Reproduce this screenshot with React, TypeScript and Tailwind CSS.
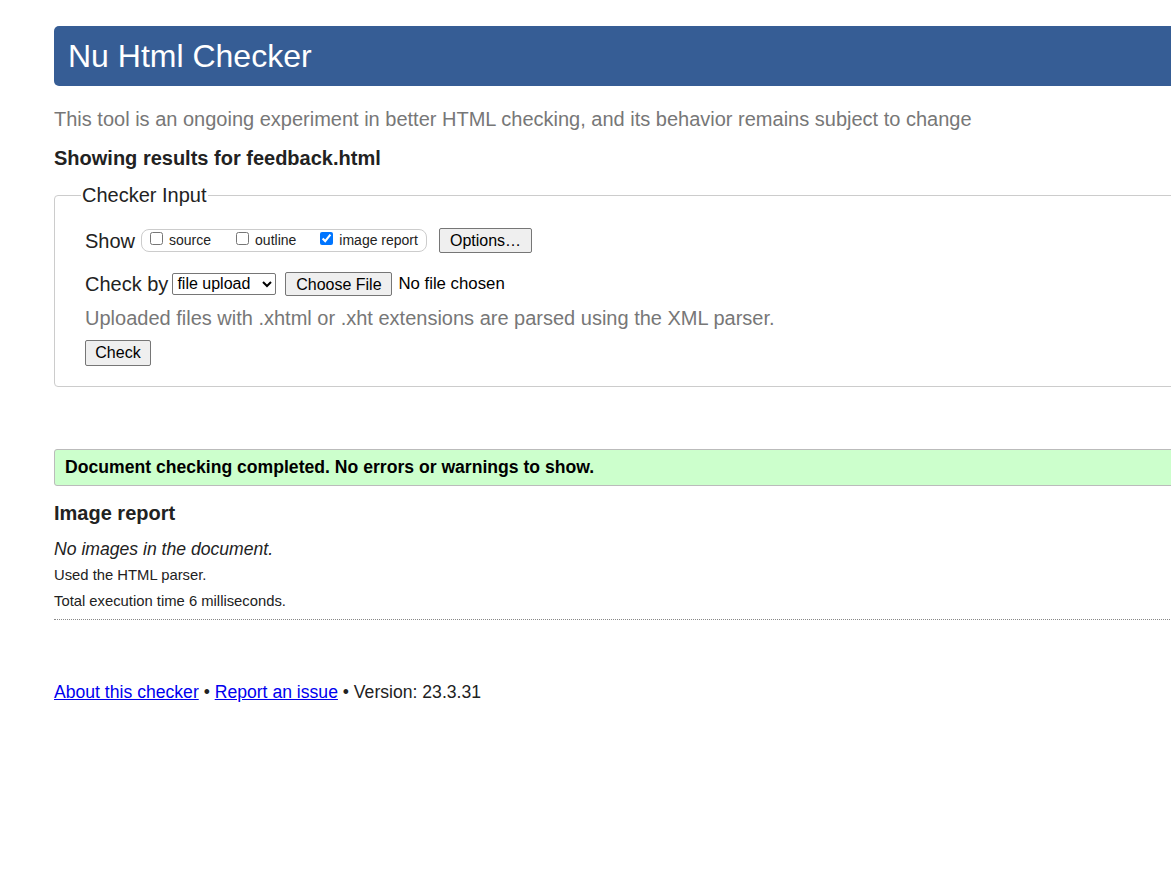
import React from 'react';

function App() {
    return (
        <div className="w-full min-h-[886px] overflow-hidden bg-white text-[#222] font-['Liberation_Sans',Arial,sans-serif]">
            <div className="ml-[54px] w-[1300px] pt-[26px]">
                <h1 className="h-[60px] flex items-center pl-[14px] bg-[#365d95] text-white text-[32px] leading-none rounded-l-[5px]">
                    Nu Html Checker
                </h1>

                <p className="mt-[21px] text-[20px] leading-6 text-[#777]">
                    This tool is an ongoing experiment in better HTML checking, and its behavior remains subject to change
                </p>

                <p className="mt-[15px] text-[20px] leading-6 font-bold">Showing results for feedback.html</p>

                <fieldset className="mt-[13px] border border-[#ccc] rounded-[4px] pl-[30px] pb-[20px]">
                    <legend className="-ml-[4px] px-[1px] text-[20px] leading-6">Checker Input</legend>

                    <div className="mt-[21px] flex items-center">
                        <span className="text-[20px] leading-6">Show</span>
                        <div className="ml-[6px] h-[23px] w-[286px] flex items-center border border-[#ccc] rounded-[8px] text-[14px]">
                            <label className="ml-[8px] flex items-center">
                                <input type="checkbox" className="w-[13px] h-[13px] m-0 -mt-[4px]" />
                                <span className="ml-[6px]">source</span>
                            </label>
                            <label className="ml-[25px] flex items-center">
                                <input type="checkbox" className="w-[13px] h-[13px] m-0 -mt-[4px]" />
                                <span className="ml-[6px]">outline</span>
                            </label>
                            <label className="ml-[24px] flex items-center">
                                <input type="checkbox" defaultChecked className="w-[13px] h-[13px] m-0 -mt-[4px] accent-[#0075ff]" />
                                <span className="ml-[6px]">image report</span>
                            </label>
                        </div>
                        <button className="ml-[12px] h-[25px] w-[93px] border border-[#767676] rounded-[2px] bg-[#efefef] text-[16px] text-black">
                            Options…
                        </button>
                    </div>

                    <div className="mt-[18px] flex items-center">
                        <span className="text-[20px] leading-6">Check by</span>
                        <select className="ml-[4px] h-[22px] w-[104px] border border-[#767676] rounded-[2px] text-[16px] text-black bg-white">
                            <option>file upload</option>
                        </select>
                        <button className="ml-[9px] h-[24px] w-[107px] border border-[#767676] rounded-[2px] bg-[#efefef] text-[16px] text-black">
                            Choose File
                        </button>
                        <span className="ml-[6px] text-[16.8px] text-black">No file chosen</span>
                    </div>

                    <p className="mt-[10px] text-[20px] leading-6 text-[#777]">
                        Uploaded files with .xhtml or .xht extensions are parsed using the XML parser.
                    </p>

                    <button className="mt-[10px] h-[26px] w-[66px] border border-[#767676] rounded-[2px] bg-[#efefef] text-[16px] text-black">
                        Check
                    </button>
                </fieldset>

                <div className="mt-[62px] h-[37px] flex items-center pl-[10px] bg-[#ccffcc] border border-[#bbb] rounded-l-[3px] text-[17.6px] font-bold text-black">
                    Document checking completed. No errors or warnings to show.
                </div>

                <h2 className="mt-[15px] text-[20px] leading-6 font-bold">Image report</h2>
                <p className="mt-[13px] text-[17.6px] italic leading-[22px]">No images in the document.</p>
                <p className="mt-[5px] text-[14.8px] leading-5">Used the HTML parser.</p>
                <p className="mt-[6px] text-[14.8px] leading-5">Total execution time 6 milliseconds.</p>
                <hr className="mt-[8px] border-0 border-t border-dotted border-[#888]" />

                <p className="mt-[61px] text-[17.6px] leading-[22px]">
                    <a href="#" className="text-[#0000ee] underline">About this checker</a>
                    {' • '}
                    <a href="#" className="text-[#0000ee] underline">Report an issue</a>
                    {' • Version: 23.3.31'}
                </p>
            </div>
        </div>
    );
}

export default App;
